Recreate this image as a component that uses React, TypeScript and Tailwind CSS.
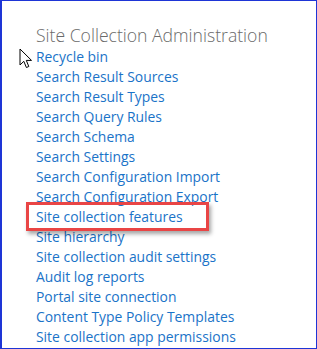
const links = [
  'Recycle bin',
  'Search Result Sources',
  'Search Result Types',
  'Search Query Rules',
  'Search Schema',
  'Search Settings',
  'Search Configuration Import',
  'Search Configuration Export',
  'Site collection features',
  'Site hierarchy',
  'Site collection audit settings',
  'Audit log reports',
  'Portal site connection',
  'Content Type Policy Templates',
  'Site collection app permissions',
];

const Cursor = () => (
  <svg className="absolute left-[17px] top-[47px]" width="14" height="21" viewBox="0 0 14 21">
    <path d="M1 1 L1 17 L4.8 13.3 L7.4 19.5 L9.8 18.5 L7.3 12.4 L12.5 12.4 Z" fill="#fff" stroke="#000" strokeWidth="1" strokeLinejoin="round" />
  </svg>
);

const App = () => {
  return (
    <div className="relative w-[317px] h-[349px] bg-white border border-[#1e35d6] border-l-2 overflow-hidden font-['Open_Sans',sans-serif]">
      <Cursor />
      <div className="pl-[34px] pt-[22px]">
        <h2 className="text-[17.6px] leading-[24px] font-light text-[#6a6a6a]">Site Collection Administration</h2>
        <ul className="">
          {links.map((l) => (
            <li key={l} className="text-[13.9px] leading-[20px] text-[#1a73c8]">
              {l}
            </li>
          ))}
        </ul>
      </div>
      <div className="absolute left-[24px] top-[201px] w-[183px] h-[29px] border-[3px] border-[#e94545] shadow-[2px_3px_4px_rgba(0,0,0,0.35)]" />
    </div>
  );
};

export default App;
